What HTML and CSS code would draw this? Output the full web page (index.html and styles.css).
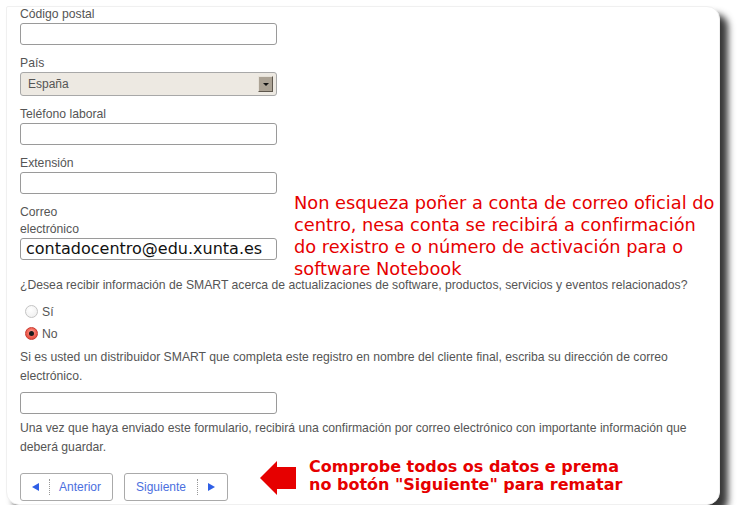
FILE: index.html
```html
<!DOCTYPE html>
<html lang="es">
<head>
<meta charset="utf-8">
<title>Registro</title>
<link rel="stylesheet" href="styles.css">
</head>
<body>
<div class="panel">
  <div class="field f1">
    <label class="lbl">Código postal</label>
    <input class="inp" type="text">
  </div>
  <div class="field f2">
    <label class="lbl">País</label>
    <div class="select"><span class="sel-text">España</span><span class="sel-btn"><span class="sel-tri"></span></span></div>
  </div>
  <div class="field f3">
    <label class="lbl">Teléfono laboral</label>
    <input class="inp" type="text">
  </div>
  <div class="field f4">
    <label class="lbl">Extensión</label>
    <input class="inp" type="text">
  </div>
  <div class="field f5">
    <label class="lbl lbl-wrap">Correo electrónico</label>
    <div class="inp inp-mail">contadocentro@edu.xunta.es</div>
  </div>
  <p class="question">¿Desea recibir información de SMART acerca de actualizaciones de software, productos, servicios y eventos relacionados?</p>
  <div class="radios">
    <div class="radio-row"><span class="radio"></span><span class="rtext">Sí</span></div>
    <div class="radio-row"><span class="radio checked"></span><span class="rtext">No</span></div>
  </div>
  <p class="para p1">Si es usted un distribuidor SMART que completa este registro en nombre del cliente final, escriba su dirección de correo electrónico.</p>
  <input class="inp inp3" type="text">
  <p class="para p2">Una vez que haya enviado este formulario, recibirá una confirmación por correo electrónico con importante información que deberá guardar.</p>
  <div class="buttons">
    <div class="btn btn-prev"><span class="tri tri-left"></span><span class="sep"></span><span class="btxt">Anterior</span></div>
    <div class="btn btn-next"><span class="btxt">Siguiente</span><span class="sep"></span><span class="tri tri-right"></span></div>
  </div>

  <div class="note note1">Non esqueza poñer a conta de correo oficial do centro, nesa conta se recibirá a confirmación do rexistro e o número de activación para o software Notebook</div>

  <div class="note2-wrap">
    <svg class="arrow" width="36" height="34" viewBox="0 0 36 34"><polygon points="0,17 17,0 17,6 36,6 36,28 17,28 17,34" fill="#e60000"/></svg>
    <div class="note note2">Comprobe todos os datos e prema<br>no botón "Siguiente" para rematar</div>
  </div>
</div>
</body>
</html>
```

FILE: styles.css
```css
html, body {
  margin: 0;
  padding: 0;
  background: #ffffff;
}

body {
  font-family: "Liberation Sans", Arial, sans-serif;
  color: #555;
}

.panel {
  position: relative;
  box-sizing: border-box;
  margin: 6px 0 0 6px;
  width: 714px;
  height: 499px;
  padding: 0 0 0 13px;
  background: #fff;
  border: 1px solid #f0f0f0;
  border-radius: 2px 13px 13px 13px;
  box-shadow: 8px 8px 7px rgba(0, 0, 0, 0.78);
}

.field {
  display: flex;
  flex-direction: column;
  align-items: flex-start;
}

.f1 { margin-top: 0; }
.f2 { margin-top: 11px; }
.f3 { margin-top: 11px; }
.f4 { margin-top: 11px; }
.f5 { margin-top: 10px; }

.lbl {
  font-size: 12.2px;
  line-height: 15px;
  color: #555;
  margin-bottom: 1px;
}

.lbl-wrap {
  width: 60px;
  line-height: 17px;
  margin-bottom: 0;
}

.inp {
  display: block;
  box-sizing: border-box;
  width: 257px;
  height: 22px;
  margin: 0;
  padding: 0 5px;
  border: 1px solid #9a9a9a;
  border-radius: 3px;
  background: #fff;
  outline: none;
}

.inp-mail {
  font-family: "DejaVu Sans", sans-serif;
  font-size: 16px;
  line-height: 20px;
  color: #111;
  padding: 0 0 0 5px;
  white-space: nowrap;
  overflow: hidden;
}

.select {
  box-sizing: border-box;
  width: 257px;
  height: 24px;
  border: 1px solid #a8a8a8;
  border-radius: 3px;
  background: #ede9e2;
  display: flex;
  align-items: center;
  justify-content: space-between;
  padding: 0 3px 0 7px;
}

.sel-text {
  font-size: 12px;
  color: #555;
}

.sel-btn {
  box-sizing: border-box;
  width: 15px;
  height: 16px;
  background: #aba294;
  border-top: 1px solid #e6e1d8;
  border-left: 1px solid #e6e1d8;
  border-right: 1px solid #5e574d;
  border-bottom: 1px solid #5e574d;
  display: flex;
  align-items: center;
  justify-content: center;
}

.sel-tri {
  width: 0;
  height: 0;
  border-left: 3px solid transparent;
  border-right: 3px solid transparent;
  border-top: 3px solid #111;
}

.question {
  margin: 18px 0 0 0;
  font-size: 12.2px;
  line-height: 15px;
  color: #555;
  white-space: nowrap;
}

.radios {
  margin-top: 8px;
  display: flex;
  flex-direction: column;
}

.radio-row {
  display: flex;
  align-items: center;
  height: 22px;
  padding-left: 5px;
}

.radio {
  box-sizing: border-box;
  width: 13px;
  height: 13px;
  border-radius: 50%;
  border: 1px solid #c4c4c4;
  background: radial-gradient(circle at 40% 35%, #ffffff, #ececec);
  margin-right: 4px;
  position: relative;
  top: -1px;
}

.radio.checked {
  border-color: #c93b30;
  background: radial-gradient(circle at 50% 40%, #ffb2a8 0%, #f36a5c 45%, #d8392c 100%);
}

.radio.checked::after {
  content: "";
  position: absolute;
  left: 3px;
  top: 3px;
  width: 5px;
  height: 5px;
  border-radius: 50%;
  background: #1a1a1a;
}

.rtext {
  font-size: 12.2px;
  color: #555;
}

.para {
  margin: 0;
  font-size: 12.2px;
  line-height: 19px;
  color: #555;
  width: 690px;
}

.p1 { margin-top: 3px; }

.inp3 { margin-top: 6px; }

.p2 { margin-top: 5px; }

.buttons {
  margin-top: 16px;
  display: flex;
  gap: 11px;
}

.btn {
  box-sizing: border-box;
  height: 28px;
  border: 1px solid #aaa;
  border-radius: 3px;
  background: #fff;
  display: flex;
  align-items: center;
}

.btn-prev {
  width: 93px;
  padding-left: 11px;
}

.btn-next {
  width: 104px;
  padding-left: 11px;
}

.btxt {
  font-size: 12px;
  color: #4b6fe0;
}

.sep {
  width: 0;
  height: 16px;
  border-left: 1px dotted #999;
}

.btn-prev .sep { margin: 0 9px 0 10px; }
.btn-next .sep { margin: 0 10px 0 11px; }

.tri {
  width: 0;
  height: 0;
  border-top: 4.5px solid transparent;
  border-bottom: 4.5px solid transparent;
}

.tri-left { border-right: 7px solid #2f5fe6; }
.tri-right { border-left: 7px solid #2f5fe6; }

.note {
  font-family: "DejaVu Sans", sans-serif;
  color: #e60000;
}

.note1 {
  position: absolute;
  left: 287px;
  top: 185px;
  width: 428px;
  font-size: 17.8px;
  line-height: 22px;
}

.note2-wrap {
  position: absolute;
  left: 253px;
  top: 451px;
  display: flex;
  align-items: flex-start;
  gap: 13px;
}

.arrow {
  margin-top: 3px;
}

.note2 {
  font-size: 16px;
  font-weight: bold;
  line-height: 18px;
  white-space: nowrap;
}
```
